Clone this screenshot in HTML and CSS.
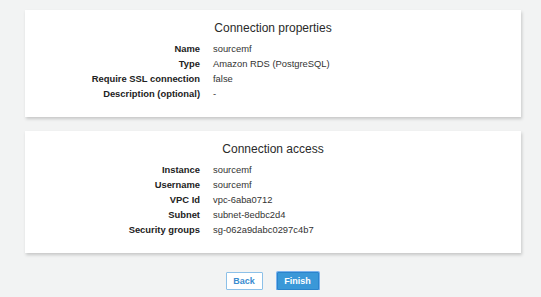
FILE: index.html
```html
<!DOCTYPE html>
<html>
<head>
<meta charset="utf-8">
<link rel="stylesheet" href="styles.css">
</head>
<body>
<div class="page">
  <section class="card">
    <h2 class="card-title">Connection properties</h2>
    <dl class="props">
      <dt>Name</dt><dd>sourcemf</dd>
      <dt>Type</dt><dd>Amazon RDS (PostgreSQL)</dd>
      <dt>Require SSL connection</dt><dd>false</dd>
      <dt>Description (optional)</dt><dd>-</dd>
    </dl>
  </section>
  <section class="card">
    <h2 class="card-title">Connection access</h2>
    <dl class="props">
      <dt>Instance</dt><dd>sourcemf</dd>
      <dt>Username</dt><dd>sourcemf</dd>
      <dt>VPC Id</dt><dd>vpc-6aba0712</dd>
      <dt>Subnet</dt><dd>subnet-8edbc2d4</dd>
      <dt>Security groups</dt><dd>sg-062a9dabc0297c4b7</dd>
    </dl>
  </section>
  <div class="actions">
    <button class="btn btn-secondary">Back</button>
    <button class="btn btn-primary">Finish</button>
  </div>
</div>
</body>
</html>
```
FILE: styles.css
```css
html, body {
  margin: 0;
  padding: 0;
  background: #f2f3f3;
  font-family: "Liberation Sans", Arial, Helvetica, sans-serif;
  color: #333;
}
.page {
  display: flex;
  flex-direction: column;
  padding: 10px 20px 0 25px;
  gap: 14px;
}
.card {
  background: #fff;
  box-shadow: 1px 2px 3px rgba(0, 0, 0, 0.18);
  padding: 10px 0 16px;
}
.card-title {
  margin: 0 0 5px;
  font-size: 12px;
  line-height: 16px;
  font-weight: normal;
  text-align: center;
  color: #2a2a2a;
}
.props {
  display: grid;
  grid-template-columns: 175px 1fr;
  column-gap: 13px;
  margin: 0;
  font-size: 9.4px;
  line-height: 15px;
}
.props dt {
  font-weight: bold;
  text-align: right;
  color: #222;
}
.props dd {
  margin: 0;
  color: #333;
}
.actions {
  display: flex;
  justify-content: center;
  gap: 14px;
  margin-top: 5px;
  padding-right: 2px;
}
.btn {
  font-family: "Liberation Sans", Arial, Helvetica, sans-serif;
  font-size: 9px;
  font-weight: bold;
  height: 18px;
  padding: 0;
  border-radius: 1px;
  line-height: 16px;
}
.btn-secondary {
  background: #fff;
  border: 1px solid #8cc0e8;
  color: #3a8ccf;
  width: 37px;
}
.btn-primary {
  background: #3a98d8;
  border: 1px solid #2b84cb;
  color: #fff;
  width: 42px;
  box-shadow: 0 0 0 1px #7bb3ef;
}
```
